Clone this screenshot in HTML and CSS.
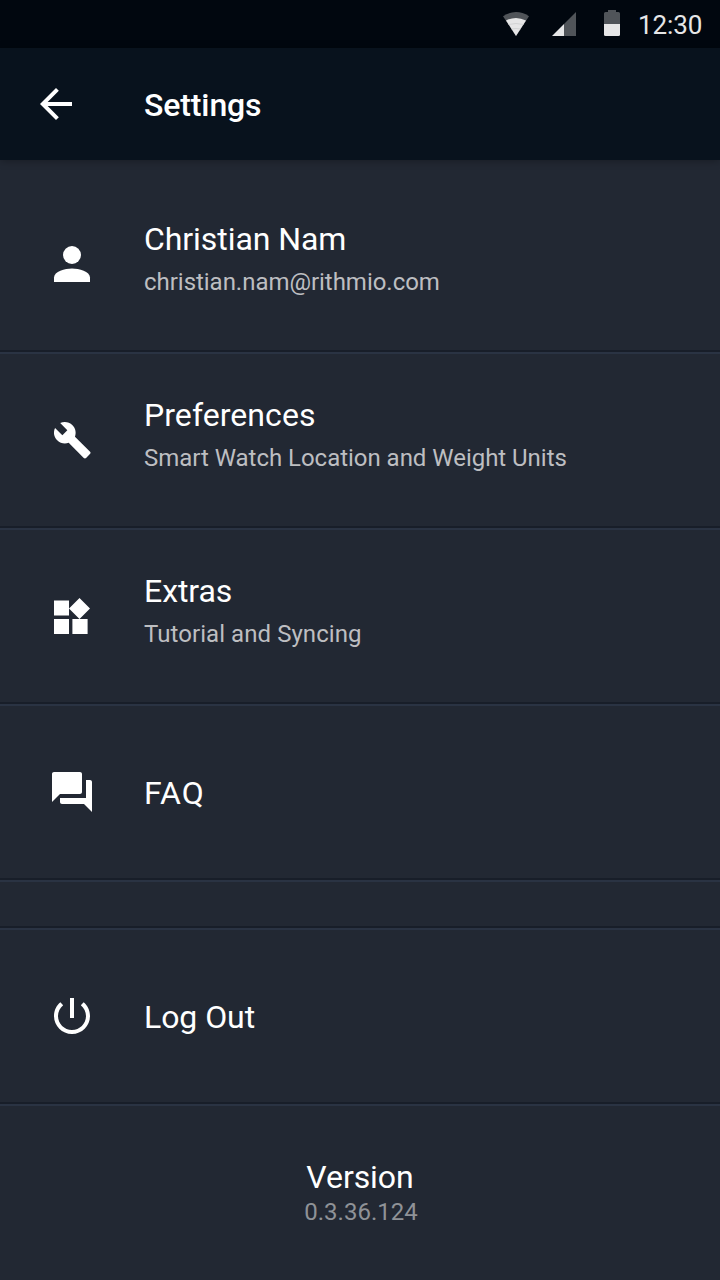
FILE: index.html
```html
<!DOCTYPE html>
<html lang="en">
<head>
<meta charset="utf-8">
<title>Settings</title>
<link rel="stylesheet" href="styles.css">
</head>
<body>
<div class="screen">
  <div class="status-bar">
    <svg class="wifi" viewBox="0 0 26 24"><path class="dim" d="M0 4.200Q13 -4.200 26 4.200L13 24z"/><path class="lit" d="M3 8.400Q13 3.400 23 8.400L13 24z"/><path class="arcs" d="M5.500 12.500Q13 10.500 20.500 12.500M8.500 17Q13 16 17.500 17"/></svg>
    <svg class="signal" viewBox="0 0 24 24"><path class="dim" d="M24 0v24H12V12z"/><path class="lit" d="M12 12v12H0z"/></svg>
    <svg class="battery" viewBox="0 0 16 26"><path class="dim" d="M4 0h8v2h2.500q1.500 0 1.500 1.500V14H0V3.500Q0 2 1.500 2H4z"/><path class="lit" d="M0 14h16v10.500q0 1.500-1.500 1.500h-13Q0 26 0 24.500z"/></svg>
    <span class="clock">12:30</span>
  </div>
  <header class="app-bar">
    <svg class="icon" viewBox="0 0 24 24"><path d="M20 11H7.830l5.590-5.590L12 4l-8 8 8 8 1.410-1.410L7.830 13H20z"/></svg>
    <h1 class="heading">Settings</h1>
  </header>
  <main class="list">
    <section class="row row-first">
      <svg class="icon" viewBox="0 0 24 24"><circle cx="12" cy="7.500" r="4.500"/><path d="M12 14.250c-3.500 0-9 1.500-9 4.500V21h18v-2.250c0-3-5.500-4.500-9-4.500z"/></svg>
      <div class="text"><div class="title">Christian Nam</div><div class="subtitle">christian.nam@rithmio.com</div></div>
    </section>
    <section class="row">
      <svg class="icon" viewBox="0 0 24 24"><path transform="translate(2.2 2.1) scale(.83)" d="M22.700 19l-9.100-9.100c.9-2.300.4-5-1.500-6.900-2-2-5-2.400-7.400-1.300L9 6 6 9 1.600 4.700C.4 7.100.9 10.100 2.900 12.100c1.900 1.900 4.600 2.400 6.900 1.500l9.100 9.100c.4.4 1 .4 1.400 0l2.300-2.300c.5-.4.5-1.100.1-1.400z"/></svg>
      <div class="text"><div class="title wide">Preferences</div><div class="subtitle">Smart Watch Location and Weight Units</div></div>
    </section>
    <section class="row">
      <svg class="icon" viewBox="0 0 24 24"><path d="M3 4.200h7.500v7.500H3zM3 13.500h7.500V21H3zM12.200 13.500h7.600V21h-7.600zM15.750 3L21 8.250l-5.250 5.250-5.250-5.250z"/></svg>
      <div class="text"><div class="title">Extras</div><div class="subtitle wide">Tutorial and Syncing</div></div>
    </section>
    <section class="row row-single">
      <svg class="icon" viewBox="0 0 24 24"><path d="M21 6h-2v9H6v2c0 .55.45 1 1 1h11l4 4V7c0-.55-.45-1-1-1zm-4 6V3c0-.55-.45-1-1-1H3c-.55 0-1 .45-1 1v14l4-4h10c.55 0 1-.45 1-1z"/></svg>
      <div class="text"><div class="title acronym">FAQ</div></div>
    </section>
    <div class="spacer"></div>
    <section class="row row-single">
      <svg class="icon" viewBox="0 0 24 24"><path d="M13 3h-2v10h2V3zm4.830 2.170l-1.420 1.420C17.990 7.860 19 9.810 19 12c0 3.870-3.130 7-7 7s-7-3.130-7-7c0-2.190 1.010-4.140 2.580-5.420L6.170 5.170C4.230 6.820 3 9.260 3 12c0 4.970 4.030 9 9 9s9-4.030 9-9c0-2.740-1.230-5.180-3.170-6.830z"/></svg>
      <div class="text"><div class="title cropped">Log Out</div></div>
    </section>
  </main>
  <footer class="version"><div class="title">Version</div><div class="number">0.3.36.124</div></footer>
</div>
</body>
</html>
```
FILE: styles.css
```css
* { box-sizing: border-box; }
body { margin: 0; background: #222833; color: #fff; font-family: Roboto, sans-serif; }
.screen { width: 720px; height: 1280px; overflow: hidden; display: flex; flex-direction: column; }
.status-bar { height: 48px; flex: none; background: #01070f; display: flex; padding-left: 503px; }
.wifi { width: 26px; height: 24px; margin: 12px 23px 0 0; }
.signal { width: 24px; height: 24px; margin: 12px 28px 0 0; }
.battery { width: 16px; height: 26px; margin: 10px 18px 0 0; }
.dim { fill: #505459; }
.lit { fill: #e6e6e7; }
.arcs { fill: none; stroke: #c9cacc; stroke-width: .7; }
.clock { font-size: 26px; line-height: 50px; letter-spacing: -.1px; color: #e6e6e7; }
.app-bar { height: 112px; flex: none; background: #08121d; display: flex; align-items: center; padding-left: 32px; gap: 64px; box-shadow: 0 1px 8px rgba(0, 0, 0, .3); position: relative; }
.heading { margin: 2px 0 0; font-size: 32px; line-height: 38px; font-weight: 500; letter-spacing: -.12px; }
.icon { width: 48px; height: 48px; flex: none; fill: #fff; }
.row { height: 176px; padding: 62px 0 0 48px; display: flex; gap: 48px; }
.row, .spacer { border-bottom: 2px solid #2a3343; box-shadow: inset 0 -2px #181e29; }
.row-first { height: 194px; padding-top: 80px; }
.spacer { height: 48px; }
.text { margin-top: -20px; }
.row-single .text { margin-top: 6px; }
.title { font-size: 32px; line-height: 38px; letter-spacing: -.06px; }
.subtitle { font-size: 24px; line-height: 28px; margin-top: 10px; letter-spacing: -.03px; color: #bdbec1; }
.wide { letter-spacing: .06px; }
.acronym { letter-spacing: 1px; }
.cropped { height: 36px; overflow: hidden; }
.version { padding-top: 52px; text-align: center; }
.number { font-size: 24px; line-height: 28px; margin-top: 2px; padding-left: 2px; color: #8f9297; }
```
